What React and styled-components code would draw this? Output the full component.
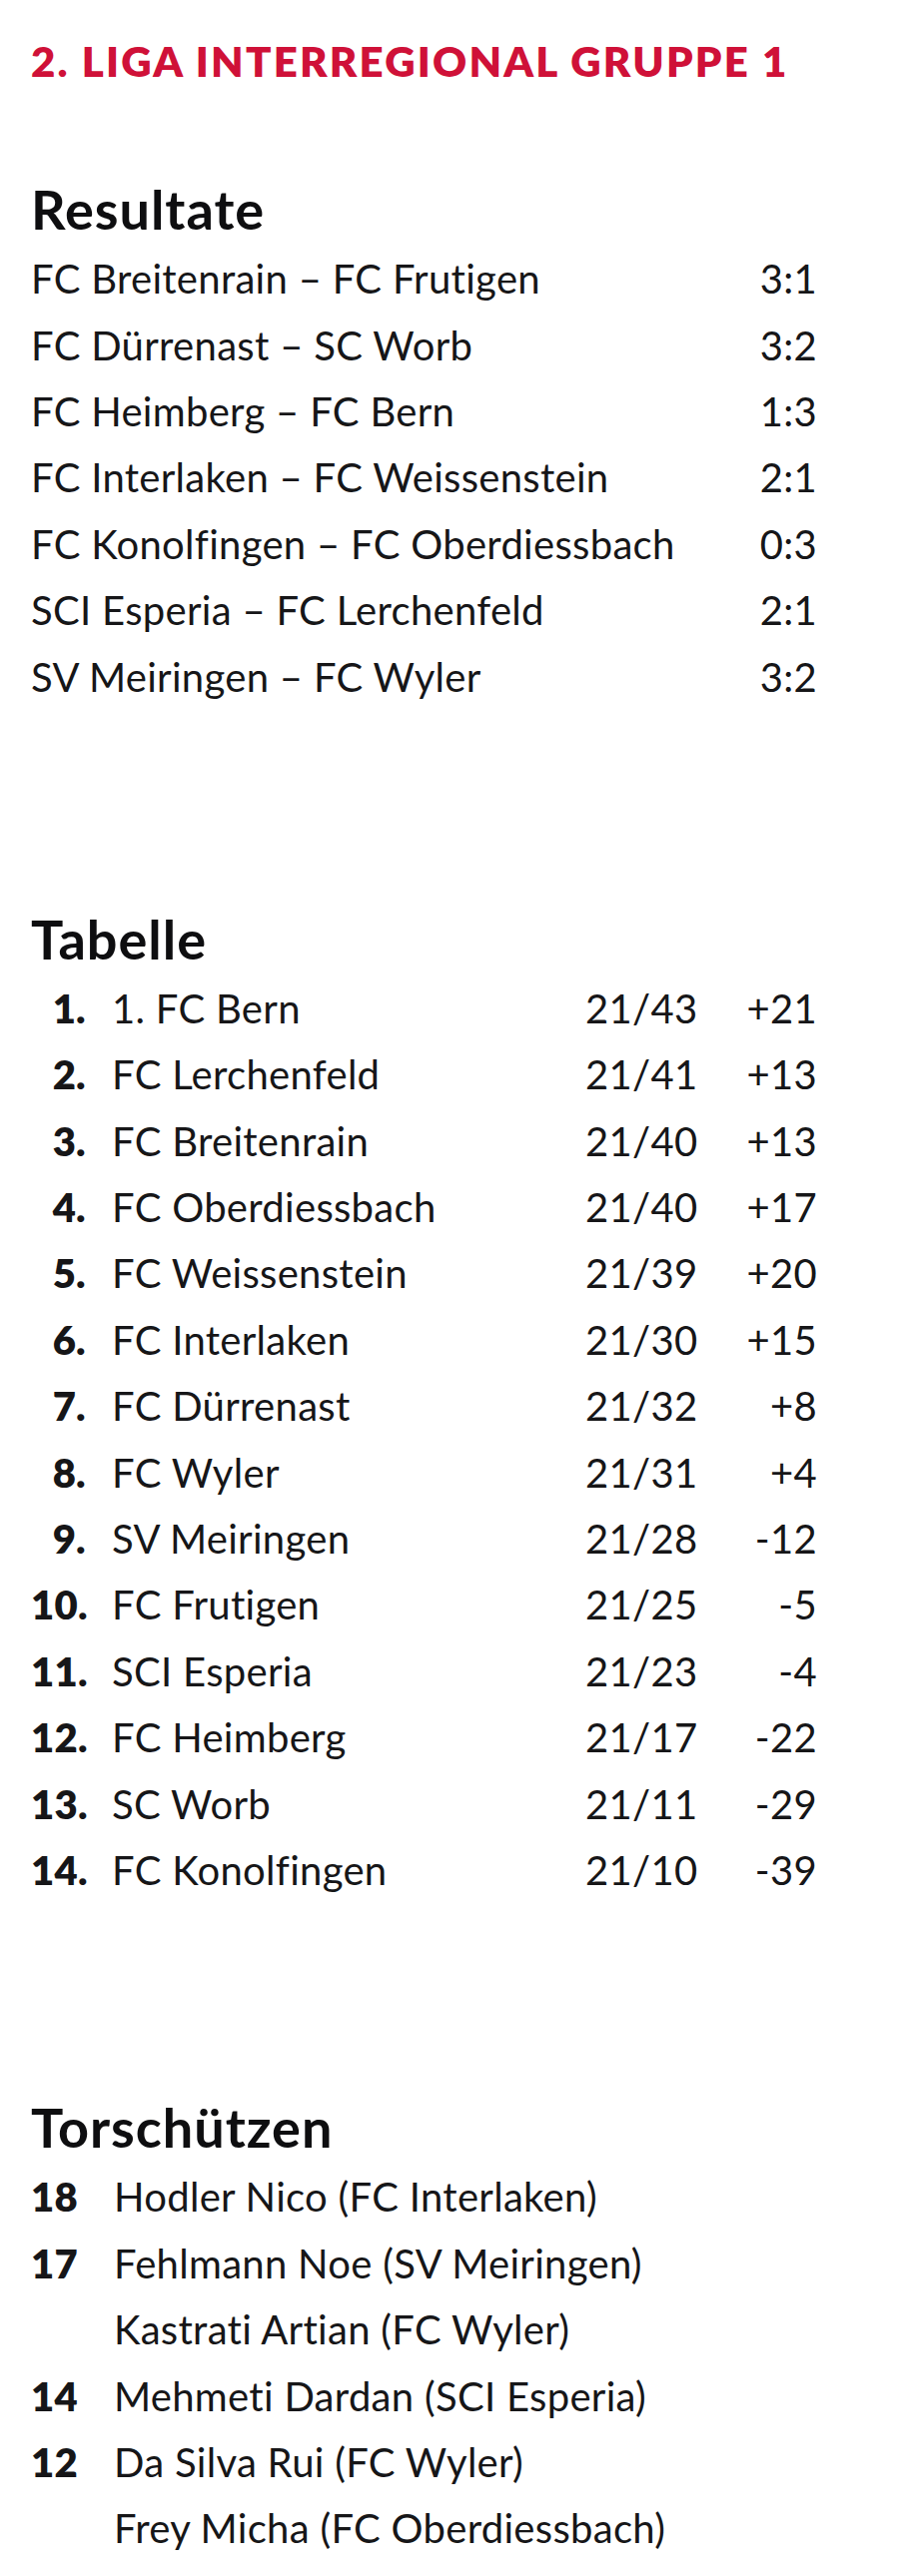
import React from 'react';
import styled, { createGlobalStyle } from 'styled-components';

const results = [
	['FC Breitenrain – FC Frutigen', '3:1'],
	['FC Dürrenast – SC Worb', '3:2'],
	['FC Heimberg – FC Bern', '1:3'],
	['FC Interlaken – FC Weissenstein', '2:1'],
	['FC Konolfingen – FC Oberdiessbach', '0:3'],
	['SCI Esperia – FC Lerchenfeld', '2:1'],
	['SV Meiringen – FC Wyler', '3:2'],
];

const table = [
	['1.', '1. FC Bern', '21/43', '+21'],
	['2.', 'FC Lerchenfeld', '21/41', '+13'],
	['3.', 'FC Breitenrain', '21/40', '+13'],
	['4.', 'FC Oberdiessbach', '21/40', '+17'],
	['5.', 'FC Weissenstein', '21/39', '+20'],
	['6.', 'FC Interlaken', '21/30', '+15'],
	['7.', 'FC Dürrenast', '21/32', '+8'],
	['8.', 'FC Wyler', '21/31', '+4'],
	['9.', 'SV Meiringen', '21/28', '-12'],
	['10.', 'FC Frutigen', '21/25', '-5'],
	['11.', 'SCI Esperia', '21/23', '-4'],
	['12.', 'FC Heimberg', '21/17', '-22'],
	['13.', 'SC Worb', '21/11', '-29'],
	['14.', 'FC Konolfingen', '21/10', '-39'],
];

const scorers = [
	['18', 'Hodler Nico (FC Interlaken)'],
	['17', 'Fehlmann Noe (SV Meiringen)'],
	['', 'Kastrati Artian (FC Wyler)'],
	['14', 'Mehmeti Dardan (SCI Esperia)'],
	['12', 'Da Silva Rui (FC Wyler)'],
	['', 'Frey Micha (FC Oberdiessbach)'],
];

export default function App() {
	return (
		<>
			<GlobalStyle />
			<Page>
				<Title>2. Liga interregional Gruppe 1</Title>

				<Section $gap={96}>
					<Heading>Resultate</Heading>
					{results.map(([match, score]) => (
						<ResultRow key={match}>
							<span>{match}</span>
							<span>{score}</span>
						</ResultRow>
					))}
				</Section>

				<Section $gap={202}>
					<Heading>Tabelle</Heading>
					{table.map(([rank, team, points, diff]) => (
						<TableRow key={team}>
							<Rank>{rank}</Rank>
							<Team>{team}</Team>
							<span>{points}</span>
							<Diff>{diff}</Diff>
						</TableRow>
					))}
				</Section>

				<Section $gap={197}>
					<Heading>Torschützen</Heading>
					{scorers.map(([goals, name]) => (
						<ScorerRow key={name}>
							<Goals>{goals}</Goals>
							<span>{name}</span>
						</ScorerRow>
					))}
				</Section>
			</Page>
		</>
	);
}

const GlobalStyle = createGlobalStyle`
	html, body {
		margin: 0;
		background: #fff;
	}
	body {
		font-family: Lato, 'Open Sans', sans-serif;
		color: #161618;
	}
`;

const Page = styled.div`
	width: 900px;
	height: 2580px;
	box-sizing: border-box;
	padding: 36px 82px 0 31px;
	background: #fff;
`;

const Title = styled.h1`
	margin: 0;
	font-size: 42px;
	line-height: 50px;
	font-weight: 800;
	text-transform: uppercase;
	letter-spacing: 2.2px;
	color: #cf1138;
	white-space: nowrap;
`;

const Section = styled.section`
	margin-top: ${(p) => p.$gap}px;
	display: flex;
	flex-direction: column;
`;

const Heading = styled.h2`
	margin: 0 0 8px;
	font-size: 54px;
	line-height: 56px;
	font-weight: 700;
	letter-spacing: 1px;
	color: #0e0e10;
`;

const Row = styled.div`
	height: 66.4px;
	font-size: 40px;
	letter-spacing: 0.3px;
	line-height: 1;
	align-items: center;
	white-space: nowrap;
`;

const ResultRow = styled(Row)`
	display: flex;
	justify-content: space-between;
`;

const TableRow = styled(Row)`
	display: grid;
	grid-template-columns: 55px 500px 1fr 80px;
`;

const Rank = styled.span`
	font-weight: 800;
	text-align: right;
`;

const Team = styled.span`
	padding-left: 26px;
`;

const Diff = styled.span`
	text-align: right;
`;

const ScorerRow = styled(Row)`
	display: grid;
	grid-template-columns: 83px 1fr;
`;

const Goals = styled.span`
	font-weight: 800;
`;
